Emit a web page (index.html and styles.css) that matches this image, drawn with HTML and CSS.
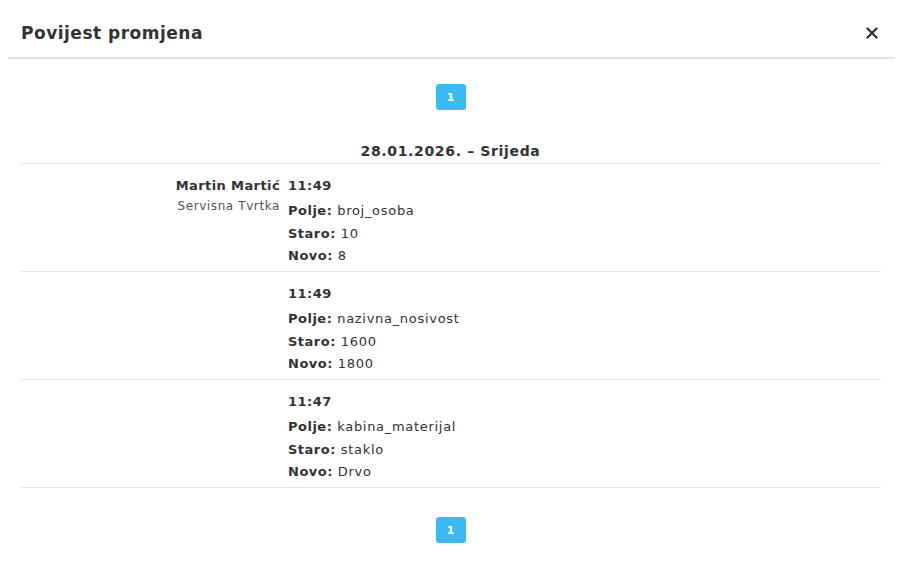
FILE: index.html
```html
<!DOCTYPE html>
<html lang="hr">
<head>
<meta charset="utf-8">
<title>Povijest promjena</title>
<link rel="stylesheet" href="styles.css">
</head>
<body>
<div class="modal">
  <div class="modal-header">
    <h2 class="modal-title">Povijest promjena</h2>
    <button class="close" aria-label="Zatvori">
      <svg width="12" height="12" viewBox="0 0 12 12"><path d="M1.5 1.5 L10.5 10.5 M10.5 1.5 L1.5 10.5" stroke="#333" stroke-width="2.4" stroke-linecap="round"/></svg>
    </button>
  </div>
  <div class="modal-body">
    <div class="pager"><span class="page active">1</span></div>
    <div class="day">28.01.2026. – Srijeda</div>
    <div class="entry">
      <div class="who">
        <div class="name">Martin Martić</div>
        <div class="company">Servisna Tvrtka</div>
      </div>
      <div class="change">
        <div class="time">11:49</div>
        <div class="line"><b>Polje:</b> broj_osoba</div>
        <div class="line"><b>Staro:</b> 10</div>
        <div class="line"><b>Novo:</b> 8</div>
      </div>
    </div>
    <div class="entry">
      <div class="who"></div>
      <div class="change">
        <div class="time">11:49</div>
        <div class="line"><b>Polje:</b> nazivna_nosivost</div>
        <div class="line"><b>Staro:</b> 1600</div>
        <div class="line"><b>Novo:</b> 1800</div>
      </div>
    </div>
    <div class="entry">
      <div class="who"></div>
      <div class="change">
        <div class="time">11:47</div>
        <div class="line"><b>Polje:</b> kabina_materijal</div>
        <div class="line"><b>Staro:</b> staklo</div>
        <div class="line"><b>Novo:</b> Drvo</div>
      </div>
    </div>
    <div class="pager bottom"><span class="page active">1</span></div>
  </div>
</div>
</body>
</html>
```
FILE: styles.css
```css
html, body {
  margin: 0;
  padding: 0;
  background: #fff;
}
body {
  font-family: "DejaVu Sans", Verdana, sans-serif;
  font-size: 13px;
  color: #333;
  letter-spacing: 0.7px;
}
b {
  font-weight: bold;
  letter-spacing: 0.5px;
}
.modal {
  width: 903px;
}
.modal-header {
  margin: 0 8px;
  display: flex;
  align-items: center;
  justify-content: space-between;
  padding: 21px 16px 12px 13px;
  border-bottom: 2px solid #e3e3e3;
}
.modal-title {
  margin: 0;
  font-size: 17px;
  line-height: 24px;
  font-weight: bold;
  letter-spacing: 0.5px;
  color: #333;
}
.close {
  border: 0;
  background: none;
  padding: 0;
  width: 14px;
  height: 14px;
  display: flex;
  align-items: center;
  justify-content: center;
  cursor: pointer;
}
.modal-body {
  padding: 0 22px 0 20px;
}
.pager {
  display: flex;
  justify-content: center;
  padding-top: 25px;
}
.pager.bottom {
  padding-top: 29px;
}
.page {
  width: 30px;
  height: 26px;
  border-radius: 3px;
  background: #3bb9f1;
  color: #fff;
  font-size: 11px;
  font-weight: bold;
  letter-spacing: 0;
  display: flex;
  align-items: center;
  justify-content: center;
}
.day {
  margin-top: 31px;
  text-align: center;
  font-size: 14px;
  font-weight: bold;
  letter-spacing: 0.65px;
  line-height: 20px;
  padding-bottom: 2px;
  border-bottom: 1px solid #e6e6e6;
}
.entry {
  display: grid;
  grid-template-columns: 260px 1fr;
  column-gap: 8px;
  padding: 11px 0 3.5px;
  border-bottom: 1px solid #e6e6e6;
}
.who {
  text-align: right;
}
.name {
  font-weight: bold;
  letter-spacing: 0.4px;
  line-height: 22px;
}
.company {
  font-size: 12px;
  letter-spacing: 0.6px;
  line-height: 18px;
  color: #555;
}
.time {
  font-weight: bold;
  letter-spacing: 0.5px;
  line-height: 22px;
  margin-bottom: 3px;
}
.line {
  line-height: 22.5px;
}
```
